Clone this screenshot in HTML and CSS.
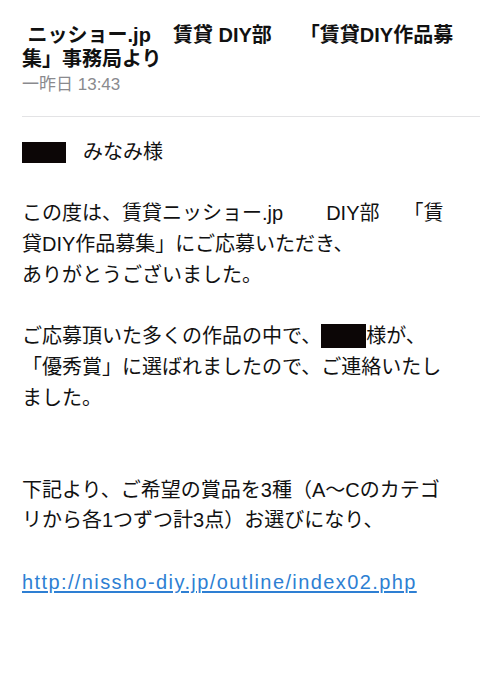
FILE: index.html
```html
<!DOCTYPE html>
<html lang="ja">
<head>
<meta charset="utf-8">
<link rel="stylesheet" href="styles.css">
</head>
<body>
<div class="mail">
  <header class="head">
    <h1 class="subject"><span class="line">&nbsp;ニッショー.jp<span class="sp t1">　</span>賃貸 DIY部<span class="sp t2">　</span>「賃貸DIY作品募</span><span class="line">集」事務局より</span></h1>
    <div class="date">一昨日 13:43</div>
  </header>
  <div class="sep"></div>
  <div class="body">
    <p class="ln"><span class="redact name"></span>みなみ様</p>
    <p class="ln blank"></p>
    <p class="ln">この度は、賃貸ニッショー.jp<span class="sp b1">　　</span>DIY部<span class="sp b2">　</span>「賃</p>
    <p class="ln">貸DIY作品募集」にご応募いただき、</p>
    <p class="ln">ありがとうございました。</p>
    <p class="ln blank"></p>
    <p class="ln">ご応募頂いた多くの作品の中で、<span class="redact inline"></span>様が、</p>
    <p class="ln">「優秀賞」に選ばれましたので、ご連絡いたし</p>
    <p class="ln">ました。</p>
    <p class="ln blank"></p>
    <p class="ln blank"></p>
    <p class="ln">下記より、ご希望の賞品を3種（A～Cのカテゴ</p>
    <p class="ln">リから各1つずつ計3点）お選びになり、</p>
    <p class="ln blank"></p>
    <p class="ln"><a class="link" href="#">http://nissho-diy.jp/outline/index02.php</a></p>
  </div>
</div>
</body>
</html>
```

FILE: styles.css
```css
html, body {
  margin: 0;
  padding: 0;
  background: #ffffff;
}
body {
  font-family: "Liberation Sans", "Noto Sans CJK JP", sans-serif;
  color: #111111;
}
.mail {
  padding: 23px 0 0 22px;
}
.subject {
  margin: 0;
  font-size: 20px;
  font-weight: bold;
  line-height: 24px;
  color: #111111;
}
.subject .line {
  display: block;
  white-space: nowrap;
}
.sp {
  display: inline-block;
  overflow: hidden;
  white-space: pre;
  vertical-align: top;
}
.t1 { width: 22px; }
.t2 { width: 28px; }
.b1 { width: 43px; }
.b2 { width: 24px; }
.date {
  margin-top: 3px;
  font-size: 17px;
  line-height: 22px;
  color: #8a8a8e;
}
.sep {
  margin-top: 20px;
  height: 1px;
  background: #e3e3e5;
}
.body {
  padding-top: 20px;
  font-size: 20px;
}
.ln {
  margin: 0;
  height: 30.7px;
  line-height: 30.7px;
  white-space: nowrap;
  display: flex;
  align-items: center;
}
.redact {
  display: inline-block;
  background: #0c0606;
}
.redact.name {
  width: 44px;
  height: 21px;
  margin-right: 17px;
}
.redact.inline {
  width: 45px;
  height: 24px;
}
.link {
  color: #2e7fd3;
  text-decoration: underline;
  text-underline-offset: 2px;
  letter-spacing: 1.4px;
}
```
